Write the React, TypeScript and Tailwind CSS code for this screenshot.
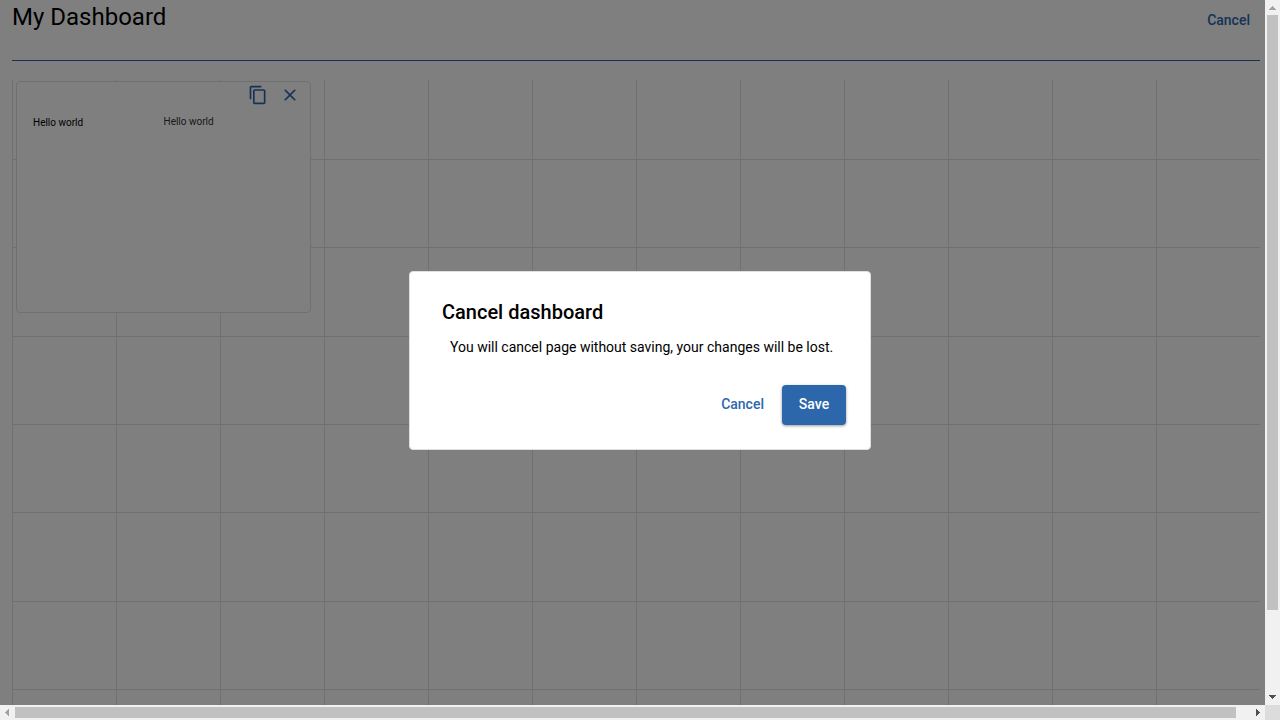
import React from "react";

const columns = Array.from({ length: 12 }, (_, i) => i);
const rows = Array.from({ length: 8 }, (_, i) => i);

function CopyIcon() {
  return (
    <svg viewBox="0 0 24 24" className="size-5" fill="currentColor" aria-hidden="true">
      <path d="M16 1H4c-1.1 0-2 .9-2 2v14h2V3h12V1zm3 4H8c-1.1 0-2 .9-2 2v14c0 1.1.9 2 2 2h11c1.1 0 2-.9 2-2V7c0-1.1-.9-2-2-2zm0 16H8V7h11v14z" />
    </svg>
  );
}

function CloseIcon() {
  return (
    <svg viewBox="0 0 24 24" className="size-5" fill="currentColor" aria-hidden="true">
      <path d="M19 6.41L17.59 5 12 10.59 6.41 5 5 6.41 10.59 12 5 17.59 6.41 19 12 13.41 17.59 19 19 17.59 13.41 12z" />
    </svg>
  );
}

function Arrow({ d, className }: { d: string; className: string }) {
  return (
    <svg viewBox="0 0 15 15" className={`size-[15px] shrink-0 ${className}`} fill="currentColor" shapeRendering="crispEdges" aria-hidden="true">
      <path d={d} />
    </svg>
  );
}

function Widget() {
  return (
    <section className="z-10 col-span-3 col-start-1 row-span-3 row-start-1 mt-px mr-[13px] mb-6 ml-1 flex flex-col rounded border border-[#e0e0e0] bg-white">
      <div className="flex justify-end gap-3 pt-[3px] pr-2.5">
        <button type="button" aria-label="Duplicate" className="text-[#2d67ab]">
          <CopyIcon />
        </button>
        <button type="button" aria-label="Remove" className="text-[#2d67ab]">
          <CloseIcon />
        </button>
      </div>
      <div className="grid grid-cols-2 px-4 pt-[9px] text-[10px] leading-4">
        <p className="pt-px">Hello world</p>
        <p className="text-[#333333]">Hello world</p>
      </div>
    </section>
  );
}

function Dialog() {
  return (
    <div className="fixed inset-0 z-30 flex items-center justify-center">
      <div
        role="dialog"
        aria-modal="true"
        aria-labelledby="dialog-title"
        className="w-[462px] max-w-full rounded border border-[#e0e0e0] bg-white p-6"
      >
        <h2 id="dialog-title" className="px-2 text-xl leading-8 font-medium">
          Cancel dashboard
        </h2>
        <p className="pt-[9px] pr-2 pl-4 text-sm leading-5">
          You will cancel page without saving, your changes will be lost.
        </p>
        <div className="flex justify-end gap-0.5 pt-7 text-sm font-medium">
          <button type="button" className="h-10 rounded px-4 pb-0.5 text-[#2d67ab]">
            Cancel
          </button>
          <button
            type="button"
            className="h-10 w-16 rounded bg-[#2d67ab] pb-0.5 text-white shadow-[0_1px_3px_rgba(0,0,0,0.4)]"
          >
            Save
          </button>
        </div>
      </div>
    </div>
  );
}

export default function App() {
  return (
    <div className="grid h-screen grid-cols-[minmax(0,1fr)_15px] grid-rows-[minmax(0,1fr)_15px] bg-white font-[Roboto,sans-serif] text-black">
      <main className="relative overflow-hidden pr-[5px] pl-3">
        <header className="flex h-[61px] items-start justify-between border-b border-[#2d67ab]">
          <h1 className="text-2xl leading-[34px]">My Dashboard</h1>
          <button type="button" className="h-10 px-2.5 text-sm font-medium text-[#2d67ab]">
            Cancel
          </button>
        </header>
        <div className="mt-[19px] grid grid-cols-12 grid-rows-[80px_88px_89px_88px_88px_89px_88px_88px]">
          {rows.map((r) =>
            columns.map((c) => (
              <div
                key={`${r}-${c}`}
                className="border-b border-l border-[#e0e0e0]"
                style={{ gridRow: r + 1, gridColumn: c + 1 }}
              />
            ))
          )}
          <Widget />
        </div>
        <div className="absolute inset-0 z-20 bg-black/50" />
      </main>
      <div aria-hidden="true" className="flex flex-col bg-[#f1f1f1]">
        <Arrow className="text-[#a3a3a3]" d="M7 6h1v1h1v1h1v1h1v1H4V9h1V8h1V7h1z" />
        <div className="min-h-0 flex-1">
          <div className="mx-0.5 h-[88.2%] bg-[#c1c1c1]" />
        </div>
        <Arrow className="text-[#505050]" d="M4 5h7v1h-1v1H9v1H8v1H7V8H6V7H5V6H4z" />
      </div>
      <div aria-hidden="true" className="flex bg-[#f1f1f1]">
        <Arrow className="text-[#a3a3a3]" d="M5 7h1V6h1V5h1V4h1v7H8v-1H7V9H6V8H5z" />
        <div className="min-w-0 flex-1 py-0.5">
          <div className="h-full w-[98.9%] bg-[#c1c1c1]" />
        </div>
        <Arrow className="text-[#505050]" d="M6 4h1v1h1v1h1v1h1v1H9v1H8v1H7v1H6z" />
      </div>
      <div className="bg-[#dcdcdc]" />
      <Dialog />
    </div>
  );
}
